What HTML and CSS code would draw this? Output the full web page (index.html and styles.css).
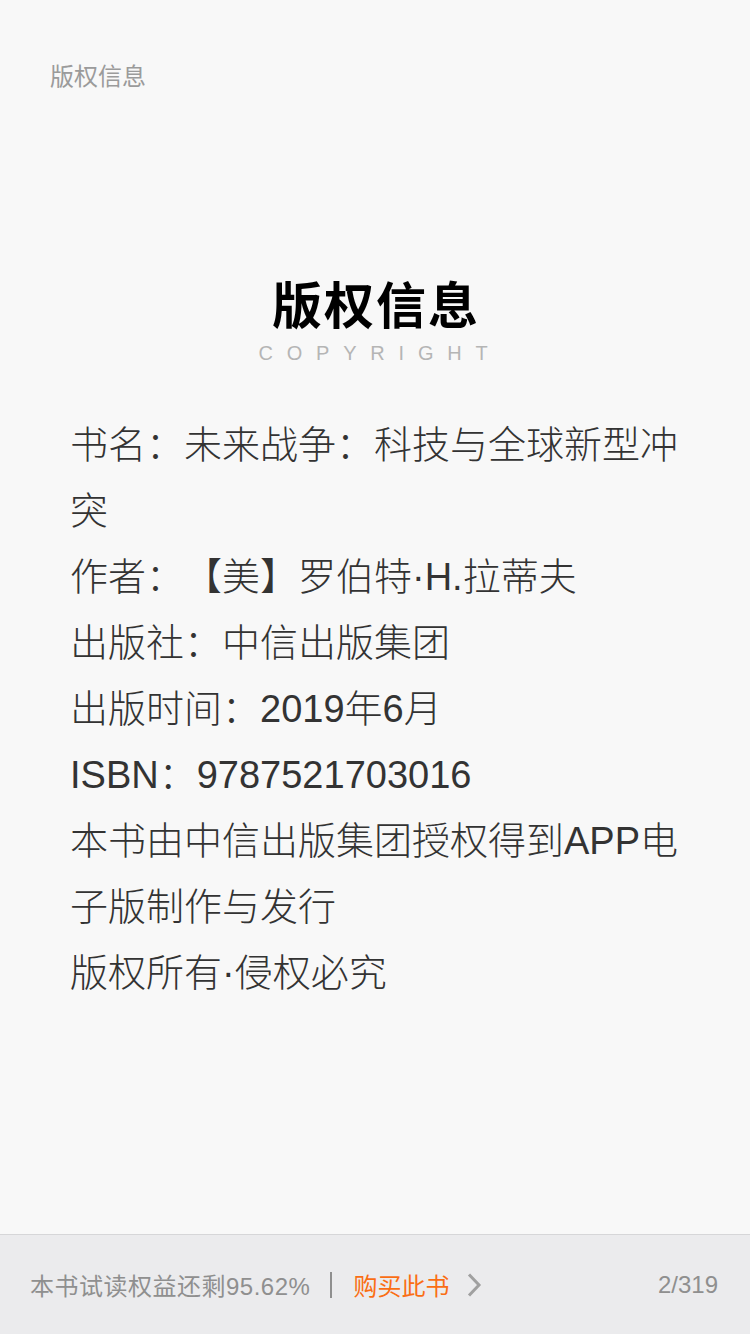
FILE: index.html
```html
<!DOCTYPE html>
<html lang="zh">
<head>
<meta charset="utf-8">
<link rel="stylesheet" href="styles.css">
</head>
<body>
<div class="page">
  <header class="top-label">版权信息</header>
  <section class="heading">
    <h1 class="title">版权信息</h1>
    <div class="subtitle">COPYRIGHT</div>
  </section>
  <section class="info">
    <p>书名：未来战争：科技与全球新型冲突</p>
    <p>作者：【美】罗伯特·H.拉蒂夫</p>
    <p>出版社：中信出版集团</p>
    <p>出版时间：2019年6月</p>
    <p>ISBN：9787521703016</p>
    <p>本书由中信出版集团授权得到APP电子版制作与发行</p>
    <p>版权所有·侵权必究</p>
  </section>
</div>
<footer class="bar">
  <div class="bar-left">
    <span class="trial">本书试读权益还剩95.62%</span>
    <span class="sep"></span>
    <span class="buy">购买此书</span>
    <svg class="chev" width="16" height="26" viewBox="0 0 16 26"><path d="M3 2.5 L13 13 L3 23.5" fill="none" stroke="#a0a0a0" stroke-width="3" stroke-linecap="butt" stroke-linejoin="miter"/></svg>
  </div>
  <span class="pages">2/319</span>
</footer>
</body>
</html>
```
FILE: styles.css
```css
html, body {
  margin: 0;
  padding: 0;
}
body {
  width: 750px;
  height: 1334px;
  background: #f8f8f8;
  font-family: "Liberation Sans", "Noto Sans CJK SC", sans-serif;
  text-spacing-trim: space-all;
  display: flex;
  flex-direction: column;
  overflow: hidden;
}
.page {
  flex: 1;
  display: flex;
  flex-direction: column;
}
.top-label {
  margin: 61px 0 0 50px;
  font-size: 24px;
  line-height: 32px;
  color: #9b9b9b;
}
.heading {
  margin-top: 179px;
  display: flex;
  flex-direction: column;
  align-items: center;
}
.title {
  margin: 0;
  font-family: "Noto Sans CJK SC", sans-serif;
  font-size: 50px;
  font-weight: 700;
  line-height: 60px;
  color: #000;
  letter-spacing: 2px;
  padding-left: 2px;
}
.subtitle {
  margin-top: 9px;
  font-family: "Liberation Sans", Arial, sans-serif;
  font-size: 20px;
  line-height: 24px;
  letter-spacing: 13.8px;
  color: #b5b5b5;
  padding-left: 10px;
}
.info {
  margin-top: 47px;
  padding: 0 64px 0 70px;
}
.info p {
  margin: 0;
  font-size: 38px;
  line-height: 66px;
  color: #333;
  font-weight: 300;
}
.bar {
  height: 99px;
  border-top: 1px solid #d6d6d8;
  background: #ebebed;
  display: flex;
  align-items: center;
  justify-content: space-between;
  padding: 0 32px 0 30px;
  font-size: 24px;
}
.bar-left {
  display: flex;
  align-items: center;
}
.trial {
  color: #8f8f8f;
  letter-spacing: 0.5px;
}
.sep {
  width: 2px;
  height: 26px;
  background: #8f8f8f;
  margin: 0 21px 0 20px;
}
.buy {
  color: #fa6e14;
}
.chev {
  margin-left: 17px;
}
.pages {
  color: #8f8f8f;
}
```
